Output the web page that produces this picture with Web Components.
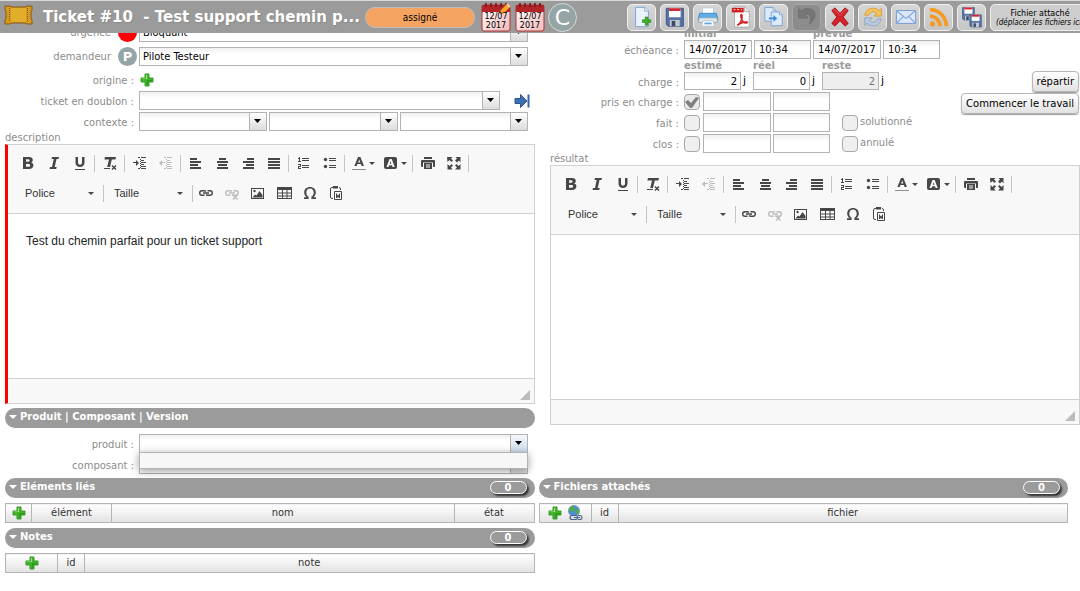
<!DOCTYPE html>
<html lang="fr">
<head>
<meta charset="utf-8">
<title>Ticket #10</title>
<style>
html, body { margin: 0; background: #fff; }
body { font-family: "DejaVu Sans", Verdana, sans-serif; font-size: 10px; color: #000; overflow: hidden; }
</style>
</head>
<body>
<ticket-page></ticket-page>
<script>
const define = (name, template) => customElements.define(name, class extends HTMLElement {
  constructor() { super(); this.attachShadow({ mode: 'open' }); }
  connectedCallback() {
    this.shadowRoot.innerHTML = typeof template === 'function' ? template(this) : template;
  }
});
const bars = (list) => list.map(([x, y, w, h = 2]) => `<rect x="${x}" y="${y}" width="${w}" height="${h}"/>`).join('');
const link = '<path d="M6.500 5.700H4a2.300 2.300 0 0 0 0 4.600h2.500M9.500 5.700H12a2.300 2.300 0 0 1 0 4.600H9.500M7.800 6.500a2 2 0 0 0-1.300-.8M8.200 9.500a2 2 0 0 0 1.300.8M5 8h6" fill="none" stroke="currentColor" stroke-width="1.400"/>';
const textLines = bars([[6,2,2,1],[9,2,5,1],[8,4,1,1],[9,5,3,1],[8,6,1,1],[9,7,5,1],[8,8,1,1],[9,9,3,1],[8,10,1,1],[9,11,5,1],[8,12,1,1],[6,13,2,1],[9,13,5,1]]);
const page = (x, y) => `<path d="M${x} ${y}h9l3 3v12h-12z" fill="#dceafa" stroke="#7a9fd4"/><path d="M${x + 9} ${y}v3h3" fill="#fff" stroke="#7a9fd4"/>`;
const floppy = (x, y, s) => `<g transform="translate(${x} ${y}) scale(${s})"><path d="M1 1h19v20H3l-2-2z" fill="#5673a3" stroke="#33507f"/><path d="M4 1h13v10H4z" fill="#fff"/><path d="M4 1h13v3H4z" fill="#d8242c"/><path d="M5 14h11v7H5z" fill="#c3c9d2"/><path d="M7 15h4v6H7z" fill="#3c4a63"/></g>`;

const ICONS = {
  bold: [16, '<path fill-rule="evenodd" d="M3 2h6c2.500 0 3.800 1.300 3.800 3.100 0 1.200-.7 2-1.500 2.400 1.300.4 2.100 1.400 2.100 2.800C13.400 12.500 11.800 14 9 14H3zM6 4.300v2.400h2.400c1.700 0 1.700-2.400 0-2.400zM6 8.900v2.800h2.700c1.900 0 1.900-2.800 0-2.800z"/>'],
  italic: [16, '<path d="M6 2h7l-.5 2h-2L8.700 12h2l-.5 2H3.500l.5-2h2L7.700 4h-2.200z"/>'],
  underline: [16, '<path d="M3.500 2h2.500v5.500c0 3 4 3 4 0V2h2.500v5.700c0 5.700-9 5.700-9 0z"/><path d="M3 14h10v1H3z"/>'],
  clearformat: [16, '<path d="M3 2h11l-.6 2.500H9.800L8 12H5.200L7 4.500H2.400z"/><path d="M2 13h6v1H2z"/><path d="M10 10.500l4 4M14 10.500l-4 4" stroke="currentColor" stroke-width="1.500"/>'],
  indent: [16, textLines + '<path d="M1 7h3V5l3 3-3 3V8H1z"/>'],
  outdent: [16, textLines + '<path d="M7 7H4V5L1 8l3 3V8h3z"/>'],
  left: [16, bars([[2,3,7],[2,6,11],[2,9,8],[2,12,11]])],
  center: [16, bars([[5,3,7],[3,6,11],[4,9,9],[3,12,11]])],
  right: [16, bars([[7,3,7],[3,6,11],[6,9,8],[3,12,11]])],
  justify: [16, bars([[2,3,12],[2,6,12],[2,9,12],[2,12,12]])],
  numbered: [16, bars([[6,3,7,1],[6,5,7,1],[6,10,7,1],[6,12,7,1],[3,2,1,5],[2,3,1,1],[2,6,3,1],[2,9,3,1],[4,10,1,1],[2,11,3,1],[2,12,1,1],[2,13,3,1]])],
  bullets: [16, '<circle cx="3.500" cy="4.500" r="1.700"/><circle cx="3.500" cy="11.500" r="1.700"/>' + bars([[7,3,7,1],[7,5,7,1],[7,10,7,1],[7,12,7,1]])],
  color: [16, '<path fill-rule="evenodd" d="M7 2h2.400l3.600 9h-2.400l-.7-1.900H6.400L5.700 11H3.400zM8.200 4.600L7.100 7.400h2.200z"/><path d="M1 14h14v1H1z" opacity=".6"/>'],
  bgcolor: [16, '<rect x="1" y="2" width="13" height="12" rx="2"/><path fill="#f8f8f8" fill-rule="evenodd" d="M6.500 4h2.200l3 8H9.600L9 10.300H6.200L5.600 12H3.500zM7.600 6.300l-.8 2.400h1.600z"/>'],
  print: [16, '<path d="M4 2h8v2H4zM2 5h12c1 0 1 1 1 1v5c0 1-1 1-1 1h-1V7.500H3V12H2c-1 0-1-1-1-1V6c0-1 1-1 1-1z"/><path fill-rule="evenodd" d="M4 8h8v6H4zm2 1.500v1h4v-1zm0 2v1h4v-1z"/>'],
  maximize: [16, '<path d="M1 2h5.500L5 3.500 7 5.500 5.500 7 3.500 5 1.500 7zM14.500 2v5.500l-1.500-2L11 7.500 9 5.500l2-2L9.500 2zM1.500 14.500V9l2 2 2-2L7 10.500l-2 2 1.500 2zM14.500 14.500H9l2-2-2-2L10.500 9l2 2 2-2z"/>'],
  link: [16, link],
  unlink: [16, link + '<path d="M9 10l4.500 4.500M13.500 10L9 14.500" stroke="currentColor" stroke-width="1.500"/>'],
  image: [16, '<path fill-rule="evenodd" d="M1 3h13v11H1zm1 1v9h11V4z"/><circle cx="4.500" cy="6" r="1.200"/><path d="M2.500 12.500l2.500-3 1.500 1L9.500 6l3 4v2.500z"/>'],
  table: [16, '<path fill-rule="evenodd" d="M1 2h15v12H1zm1 3v2.500h4V5zm5 0v2.500h3.500V5zm4.500 0v2.500H15V5zM2 8.500V13h4V8.500zm5 0V13h3.500V8.500zm4.500 0V13H15V8.500z"/><path d="M2 10.500h13v1H2z"/>'],
  omega: [16, '<path d="M2 14v-1.800h2.600C2.900 10.900 2.200 9.300 2.200 7.400 2.200 4.300 4.500 2 8 2s5.800 2.300 5.800 5.400c0 1.900-.7 3.500-2.400 4.800H14V14H9.400v-2.200c1.600-.9 2.300-2.400 2.300-4.400 0-2.300-1.300-4-3.700-4S4.300 5.100 4.300 7.400c0 2 .7 3.500 2.300 4.400V14z"/>'],
  paste: [16, '<path d="M5 2.500H4Q2.500 2.500 2.500 4v8q0 1.500 1.500 1.500h1M11 2.500q1.500 0 1.500 1.500v1" fill="none" stroke="currentColor"/><path d="M5 1h5v2.500H5z"/><path d="M6.500 6.500h7v8h-7z" fill="none" stroke="currentColor"/><path d="M8 8.500h1v2l1-1 1 1v-2h1V13h-1l-1-1.200L9 13H8z"/>'],
  plus: [16, '<path d="M6 2h4v4h4v4h-4v4H6v-4H2V6h4z" fill="#41b528" stroke="#3a9a2c"/><path d="M7 3h1v4H3V6.500h4z" fill="#a4e38a"/><path d="M8 8h5v1.500H9.500V13H8z" fill="#2f9a1a"/>'],
  goto: [16, '<path d="M1 5.500h5.500V1.500l6.500 6.500-6.500 6.500v-4H1z" fill="#3d70b4" stroke="#2c5590"/><path d="M13.500 1.500h2v13h-2z" fill="#3465a4"/>'],
  globe: [16, '<circle cx="7" cy="6" r="5.500" fill="#4c8fd6" stroke="#7f9cba"/><path d="M2 4q3-4 5-2t-1 4-4-2zM8 5q4-2 4 1t-2 3-2-4z" fill="#4fae3c"/><path d="M5 10.500h4q1.500 0 1.500 2t-1.500 2H5q-2 0-2-2t2-2zM11 10.500h2.500q1.500 0 1.500 2t-1.500 2H11M7 12.500h6" fill="#d5deea" stroke="#4d6485" stroke-width="1.200"/>'],
  newdoc: [24, '<path d="M5 1.500h10l4 4v17H5z" fill="#eaf2fc" stroke="#7a9fd4"/><path d="M15 1.500v4h4" fill="#fff" stroke="#7a9fd4"/><path d="M12.500 15h3v-3h3v3h3v3h-3v3h-3v-3h-3z" fill="#3fae2a" stroke="#2a8a1e" stroke-width=".7"/>'],
  save: [24, floppy(1.5, 1.5, 0.98)],
  printer: [24, '<path d="M6 2h12v8H6z" fill="#fafdff" stroke="#bccbd9"/><path d="M3 8h18l1.500 5v3h-21v-3z" fill="#60aee8" stroke="#3c87c8"/><path d="M2 13h20v5H2z" fill="#e6ebf0" stroke="#9aa7b4"/><path d="M6 16h12l1 6H5z" fill="#fff" stroke="#b3c0cc"/><path d="M8 18h8v2H8z" fill="#62a9e0"/>'],
  pdf: [24, '<path d="M5 1h11l5 5v17H5z" fill="#fff" stroke="#a7a7a7"/><path d="M16 1v5h5" fill="#eee" stroke="#a7a7a7"/><path d="M2 2h13v5H2z" fill="#d31e1e"/><path d="M4 4h2M8 4h2M12 4h1" fill="none" stroke="#fff"/><path d="M8 21c3-1 6-7 5-11-1-2-2 1 0 5s5 4 6 3-6-1-11 3z" fill="none" stroke="#cf2323" stroke-width="1.800"/>'],
  copy: [24, page(2, 1.5) + page(9, 6.500) + '<path d="M6 12h5V9l5 4.500-5 4.500v-3H6z" fill="#3d8ce0" stroke="#fff" stroke-width=".6"/>'],
  undo: [24, '<path d="M3 3v10h10l-3.500-3.500c4-2 8.500 1 5.500 10 8-6 8-17-3-16.500-2.500 0-4.500 1-6 2.500z" fill="#777" stroke="#6d6d6d"/>'],
  remove: [24, '<path d="M3 5l3.500-3L12 8l5.500-6L21 5l-5.500 7 5.500 7-3.500 3L12 16l-5.500 6L3 19l5.500-7z" fill="#d6232b" stroke="#9f1a20"/><path d="M5 5l1.500-1L12 10l5.500-6L19 5" fill="none" stroke="#e2565c"/>'],
  refresh: [24, '<path d="M3 10C4 2 14 0 18 5l3-2v8h-8l3-3c-3-3-8-2-9 2z" fill="#f5c55c" stroke="#d79d35"/><path d="M21 14c-1 8-11 10-15 5l-3 2v-8h8l-3 3c3 3 8 2 9-2z" fill="#b9cbe0" stroke="#8ea5c0"/>'],
  mail: [24, '<path d="M1.500 5h21v14h-21z" fill="#dbe8fa" stroke="#6f96cf"/><path d="M2 5.500l10 8 10-8M2 18.500l7-7M22 18.500l-7-7" fill="none" stroke="#7fa3d8" stroke-width="1.200"/>'],
  feed: [24, '<g fill="none" stroke="#f59a23" stroke-width="4"><path d="M2 11c6 0 11 5 11 11"/><path d="M2 4c10 0 18 8 18 18"/></g><circle cx="5" cy="19.500" r="2.800" fill="#f59a23"/>'],
  multi: [24, floppy(1, 1, 0.68) + floppy(9, 9, 0.66)],
};

define('app-icon', (el) => {
  const [box, body] = ICONS[el.getAttribute('name')];
  return `<style>:host{display:block;flex:none;width:var(--icon,16px);height:var(--icon,16px)}svg{display:block;width:100%;height:100%}</style>
  <svg viewBox="0 0 ${box} ${box}" fill="currentColor" aria-hidden="true">${body}</svg>`;
});

define('tool-button', (el) => `<style>
  :host { display: block; flex: none; }
  button { display: grid; place-items: center; width: 29px; height: 27px; padding: 0; box-sizing: border-box;
    border: 1px solid #efefef; border-radius: 5px; background: linear-gradient(#d6d6d6, #c6c6c6); --icon: 22px; }
  button:disabled { background: #8c8c8c; border-color: #a8a8a8; }
  </style><button type="button" aria-label="${el.getAttribute('label')}" ${el.hasAttribute('disabled') ? 'disabled' : ''}><app-icon name="${el.getAttribute('icon')}"></app-icon></button>`);

define('date-badge', (el) => `<style>
  :host { display: block; flex: none; }
  button { display: grid; width: 30px; height: 30px; padding: 0; border: 0; background: none; font: 8px/9px "DejaVu Sans", sans-serif; color: #000; }
  svg, span { grid-area: 1 / 1; }
  span { padding-top: 10px; text-align: center; }
  </style><button type="button"><svg width="30" height="30" viewBox="0 0 30 30" aria-hidden="true">
  <defs><linearGradient id="g" x1="0" y1="0" x2="1" y2="1"><stop offset="0" stop-color="#fff"/><stop offset="1" stop-color="#f3b9b9"/></linearGradient></defs>
  <rect x="1" y="3" width="28" height="26" rx="2" fill="url(#g)" stroke="#b43232"/><path d="M1 4q0-1 1-1h26q1 0 1 1v6H1z" fill="#b32428"/>
  <path d="M5 1v4M10 1v4M15 1v4M20 1v4M25 1v4" stroke="#6d1416" stroke-width="1.500"/>
  ${el.hasAttribute('edit') ? '<path d="M19 12l1-4 6-6 3 3-6 6z" fill="#f6a531" stroke="#c9761c" stroke-width=".7"/><path d="M26 2l3 3" stroke="#f0c9a0" stroke-width="2"/>' : ''}
  </svg><span>12/07<br>2017</span></button>`);

define('ticket-header', `<style>
  :host { display: flex; align-items: center; height: 33px; box-sizing: border-box; border-top: 1px solid #d9d9d9; background: #9b9b9b; overflow: hidden; position: relative; z-index: 1; }
  .logo { flex: none; margin-left: 4px; margin-bottom: 4px; }
  h1 { flex: 1; min-width: 0; margin: 0 4px 0 10px; font-size: 15px; line-height: 20px; color: #fff; white-space: pre; overflow: hidden; text-shadow: 1px 1px 1px #8a8a8a; }
  .status { flex: none; width: 110px; height: 21px; box-sizing: border-box; border: 1px solid #bdbdbd; border-radius: 10px; background: #f4a460;
    font: 10px/20px "DejaVu Sans Condensed", "DejaVu Sans", sans-serif; text-align: center; }
  .dates { display: flex; gap: 4px; margin: 0 3px 0 6px; }
  .avatar { flex: none; width: 29px; height: 29px; box-sizing: border-box; border: 1px solid #d5dada; border-radius: 50%; background: #95a5a6; color: #fff; font: 22px/27px "DejaVu Sans", sans-serif; text-align: center; }
  nav { display: flex; gap: 4px; margin-left: 50px; }
  .drop { flex: none; width: 100px; height: 27px; box-sizing: border-box; margin: 0 -10px 0 4px; padding: 4px 0 0; border: 1px solid #efefef; border-radius: 5px; background: #cdcdcd;
    font: 8px/9px "DejaVu Sans", sans-serif; text-align: center; white-space: nowrap; }
  .drop em { font-family: "DejaVu Sans Condensed", "DejaVu Sans", sans-serif; }
  </style>
  <svg class="logo" width="29" height="20" viewBox="0 0 29 20" aria-hidden="true"><path d="M1 1h5q1 1 2 1h13q1 0 2-1h5v4l-1 2v6l1 2v4h-5q-1-1-2-1H8q-1 0-2 1H1v-4l1-2V7L1 5z" fill="#d79a1c" stroke="#87591a"/><path d="M7 3h15v14H7z" fill="#e3ad2c"/><path d="M5.500 3v14M23.500 3v14" stroke="#8d5e17" stroke-dasharray="1 1"/></svg>
  <h1>Ticket #10  - Test support chemin p...</h1>
  <div class="status">assigné</div>
  <div class="dates"><date-badge edit></date-badge><date-badge></date-badge></div>
  <div class="avatar">C</div>
  <nav>
    <tool-button icon="newdoc" label="Nouveau"></tool-button><tool-button icon="save" label="Enregistrer"></tool-button>
    <tool-button icon="printer" label="Imprimer"></tool-button><tool-button icon="pdf" label="Exporter"></tool-button>
    <tool-button icon="copy" label="Copier"></tool-button><tool-button icon="undo" label="Annuler" disabled></tool-button>
    <tool-button icon="remove" label="Supprimer"></tool-button><tool-button icon="refresh" label="Actualiser"></tool-button>
    <tool-button icon="mail" label="Courriel"></tool-button><tool-button icon="feed" label="Suivi"></tool-button>
    <tool-button icon="multi" label="Mode multiple"></tool-button>
  </nav>
  <div class="drop">Fichier attaché<br><em>(déplacer les fichiers ici)</em></div>`);

define('combo-box', `<style>
  :host { display: grid; grid-template-columns: minmax(0, 1fr) 17px; height: 19px; box-sizing: border-box; border: 1px solid #b3b3b3; background: linear-gradient(#f0f0f0, #fff 6px); position: relative; min-width: 0; }
  ::slotted(select) { grid-area: 1 / 1 / 2 / 3; width: 100%; height: 17px; padding: 0 20px 0 3px; border: 0; appearance: none; background: none; color: #000; font: 11px/17px "DejaVu Sans Condensed", "DejaVu Sans", sans-serif; outline: 0; }
  svg { grid-area: 1 / 2; display: block; width: 16px; height: 17px; border-left: 1px solid #b3b3b3; background: linear-gradient(#fff, #dcdcdc); pointer-events: none; }
  :host([open]) svg { background: linear-gradient(#f3f7fc, #cfdcee); }
  .menu { display: none; }
  :host([open]) .menu { display: block; position: absolute; z-index: 2; left: -1px; right: -1px; top: 17px; height: 15px; border: 1px solid #b3b3b3; background: #f7f7f7; box-shadow: 0 2px 8px rgba(0,0,0,.4); }
  </style><slot></slot><svg viewBox="0 0 16 17" aria-hidden="true"><path d="M4 6h7L7.500 10z"/></svg><div class="menu"></div>`);

const FIELD_CSS = `
  .row { display: grid; grid-template-columns: 129px minmax(0, 1fr); column-gap: 5px; align-items: center; margin-bottom: 2px; }
  .row > label, .row > .label { text-align: right; color: #8c8c8c; line-height: 13px; padding-top: 2px; white-space: nowrap; }
  label { color: #8c8c8c; }
`;

define('rich-editor', (el) => {
  const b = (n, off) => `<button type="button" aria-label="${n}" ${off ? 'disabled' : ''}><app-icon name="${n}"></app-icon></button>`;
  const c = (n) => `<button type="button" class="wide" aria-label="${n}"><app-icon name="${n}"></app-icon><i class="caret"></i></button>`;
  const sep = '<span class="sep"></span>';
  const combo = (t) => `<button type="button" class="combo">${t}<i class="caret"></i></button><span class="line"></span>`;
  return `<style>
  :host { display: block; }
  label { display: block; height: 12px; line-height: 12px; color: #8c8c8c; }
  .box { height: 260px; box-sizing: border-box; display: flex; flex-direction: column; border: 1px solid #d1d1d1; background: #fff; }
  :host([required]) .box { border-left: 3px solid #f00; }
  .bar { padding: 5px 7px 7px; display: grid; gap: 4px; background: #f8f8f8; border-bottom: 1px solid #d1d1d1; color: #474747; }
  .tools { display: flex; align-items: center; height: 26px; }
  button { display: grid; place-items: center; width: 26px; height: 26px; padding: 0; border: 0; background: none; color: inherit; }
  button:disabled { color: #bdbdbd; }
  button.wide { display: flex; align-items: center; justify-content: center; gap: 2px; width: 32px; }
  button.combo { display: flex; align-items: center; justify-content: space-between; width: 88px; padding: 0 9px 0 10px; font: 11px/16px "Liberation Sans", Arial, sans-serif; color: #333; }
  .caret { flex: none; width: 0; border: 3px solid transparent; border-bottom: 0; border-top-color: #474747; }
  .sep, .line { flex: none; width: 1px; height: 17px; background: #c4c4c4; }
  .sep { margin: 0 2px 0 1px; }
  textarea { flex: 1; min-height: 0; margin: 0; padding: 19px 18px; border: 0; resize: none; outline: 0; font: 12px/16px "Liberation Sans", Arial, sans-serif; color: #222; background: #fff; }
  .foot { display: flex; justify-content: flex-end; align-items: flex-end; height: 25px; padding: 0 4px 3px; box-sizing: border-box; border-top: 1px solid #d1d1d1; background: #f8f8f8; }
  .grip { border: 5px solid; border-color: transparent #bcbcbc #bcbcbc transparent; }
  </style>
  <label for="text">${el.getAttribute('label')}</label>
  <div class="box"><div class="bar">
    <div class="tools">${b('bold')}${b('italic')}${b('underline')}${sep}${b('clearformat')}${sep}${b('indent')}${b('outdent', 1)}${sep}${b('left')}${b('center')}${b('right')}${b('justify')}${sep}${b('numbered')}${b('bullets')}${sep}${c('color')}${c('bgcolor')}${sep}${b('print')}${b('maximize')}${sep}</div>
    <div class="tools">${combo('Police')}${combo('Taille')}${b('link')}${b('unlink', 1)}${b('image')}${b('table')}${b('omega')}${b('paste')}</div>
  </div><textarea id="text">${el.getAttribute('value') || ''}</textarea><div class="foot"><span class="grip"></span></div></div>`;
});

define('section-bar', (el) => `<style>
  :host { display: flex; align-items: center; height: 20px; box-sizing: border-box; padding: 0 8px 0 4px; border-radius: 10px; background: #9b9b9b; color: #fff; font-size: 10px; font-weight: bold; line-height: 16px; }
  i { border: 4px solid transparent; border-top-color: #fff; border-bottom: 0; margin: 0 3px 2px 0; }
  h2 { flex: 1; margin: 0 0 2px; font: inherit; }
  .count { width: 37px; height: 13px; box-sizing: border-box; border: 1px solid #fff; border-radius: 7px; box-shadow: 2px 2px 2px #333; background: #9b9b9b; font-size: 10px; line-height: 12px; text-align: center; margin-bottom: 1px; }
  </style><i></i><h2>${el.getAttribute('label')}</h2>${el.hasAttribute('count') ? `<span class="count">${el.getAttribute('count')}</span>` : ''}`);

define('list-table', (el) => {
  const cols = el.getAttribute('columns').split(',').map((c) => c.split(':'));
  return `<style>
  :host { display: block; margin: 5px 0; }
  table { width: 100%; border-collapse: collapse; table-layout: fixed; }
  th { height: 18px; padding: 0; border: 1px solid #b5b5b5; background: linear-gradient(#fff, #e2e2e2); font: 11px/18px "DejaVu Sans Condensed", "DejaVu Sans", sans-serif; color: #333; }
  .tools { display: flex; justify-content: center; gap: 4px; }
  .tools button { display: block; padding: 0; border: 0; background: none; }
  </style><table><colgroup>${cols.map(([, w]) => `<col${w ? ` style="width:${w}px"` : ''}>`).join('')}</colgroup>
  <thead><tr>${cols.map(([n]) => `<th scope="col">${n[0] === '+' ? `<span class="tools"><button type="button" aria-label="Ajouter"><app-icon name="plus"></app-icon></button>${n === '++' ? '<button type="button" aria-label="Ajouter un lien"><app-icon name="globe"></app-icon></button>' : ''}</span>` : n}</th>`).join('')}</tr></thead></table>`;
});

define('ticket-request', `<style>${FIELD_CSS}
  :host { display: block; }
  .fields { padding-right: 7px; }
  .marked { grid-template-columns: 132px minmax(0, 1fr); column-gap: 2px; margin-bottom: 5px; }
  .pair { display: flex; justify-content: flex-end; align-items: center; gap: 7px; height: 19px; }
  .dot { width: 19px; height: 19px; border-radius: 50%; background: #f00; }
  .who { background: #95a5a6; color: #fff; font-size: 13px; font-weight: bold; line-height: 19px; text-align: center; }
  .requester { margin-bottom: 4px; }
  .three { display: grid; grid-template-columns: repeat(3, 1fr); gap: 2px; }
  .with-link { display: flex; }
  .with-link combo-box { flex: 1; margin-right: 14px; }
  button.icon { padding: 0; border: 0; background: none; display: block; }
  .origin { height: 19px; }
  .with-link button { margin-right: -2px; }
  .last { margin-bottom: 1px; }
  section-bar { margin: 4px 0 6px; }
  </style>
  <div class="fields">
    <div class="row marked"><div class="pair"><label for="urgence">urgence</label><span class="dot"></span></div><combo-box><select id="urgence"><option>Bloquant</option></select></combo-box></div>
    <div class="row marked requester"><div class="pair"><label for="demandeur">demandeur</label><span class="dot who">P</span></div><combo-box><select id="demandeur"><option>Pilote Testeur</option></select></combo-box></div>
    <div class="row origin"><span class="label">origine :</span><button type="button" class="icon" aria-label="Ajouter une origine"><app-icon name="plus"></app-icon></button></div>
    <div class="row"><label for="doublon">ticket en doublon :</label><div class="with-link"><combo-box><select id="doublon"><option></option></select></combo-box><button type="button" class="icon" aria-label="Ouvrir le ticket"><app-icon name="goto"></app-icon></button></div></div>
    <div class="row last"><label for="ctx">contexte :</label><div class="three"><combo-box><select id="ctx"><option></option></select></combo-box><combo-box><select aria-label="contexte 2"><option></option></select></combo-box><combo-box><select aria-label="contexte 3"><option></option></select></combo-box></div></div>
  </div>
  <rich-editor label="description" required value="Test du chemin parfait pour un ticket support"></rich-editor>
  <section-bar label="Produit | Composant | Version"></section-bar>
  <div class="fields">
    <div class="row"><label for="produit">produit :</label><combo-box open><select id="produit"><option></option></select></combo-box></div>
    <div class="row"><label for="composant">composant :</label><combo-box><select id="composant"><option></option></select></combo-box></div>
  </div>`);

const CHECK = "url(\"data:image/svg+xml,%3Csvg xmlns='http://www.w3.org/2000/svg' viewBox='0 0 14 14'%3E%3Cpath d='M0 7l3-2 3 3 5-6 3 1-7 10H5z' fill='%23808080'/%3E%3C/svg%3E\")";
define('ticket-treatment', `<style>${FIELD_CSS}
  :host { display: block; }
  .fields { display: grid; grid-template-columns: minmax(0, 1fr) auto; }
  .actions { display: flex; flex-direction: column; align-items: flex-end; gap: 1px; padding: 44px 1px 0 0; }
  .actions button { height: 21px; box-sizing: border-box; padding: 0 4px; border: 1px solid #b5b5b5; border-radius: 4px; background: linear-gradient(#fff, #e2e2e2); box-shadow: 0 1px 1px #999; font: 10px/20px "DejaVu Sans", sans-serif; color: #000; }
  .heads { display: grid; grid-template-columns: 64px 64px 1fr; column-gap: 5px; padding-left: 134px; height: 13px; line-height: 13px; font-weight: bold; color: #9b9b9b; }
  .heads.two { height: 12px; grid-template-columns: 124px 1fr; }
  .line { display: flex; align-items: center; gap: 2px; }
  input[type=text] { width: 57px; height: 19px; box-sizing: border-box; margin: 0; padding: 0 4px; border: 1px solid #b3b3b3; background: linear-gradient(#f0f0f0, #fff 6px); font: 10px/15px "DejaVu Sans", sans-serif; color: #000; outline: 0; }
  input.day { width: 68px; }
  .when { margin: 0; height: 20px; }
  .work input[type=text] { height: 18px; text-align: right; padding: 0 3px 0 0; }
  .work span { width: 8px; line-height: 18px; font-size: 11px; }
  input:disabled { background: #eee !important; color: #777 !important; }
  input[type=checkbox] { appearance: none; flex: none; width: 16px; height: 16px; margin: 0 1px 0 0; border: 1px solid #a8a8a8; border-radius: 4px; background: #efefef; }
  input[type=checkbox]:checked { background: #e9e9e9 ${CHECK}; }
  .line input.extra { margin: 0 0 0 10px; }
  .line label { padding-bottom: 2px; }
  .work { margin-bottom: 2px; }
  .state { height: 19px; }
  .last { margin-bottom: 0; }
  </style>
  <div class="fields"><div>
    <div class="heads two"><span>initial</span><span>prévue</span></div>
    <div class="row when"><label for="d1">échéance :</label><div class="line"><input type="text" class="day" id="d1" value="14/07/2017"><input type="text" aria-label="heure initiale" value="10:34"><input type="text" class="day" aria-label="date prévue" value="14/07/2017"><input type="text" aria-label="heure prévue" value="10:34"></div></div>
    <div class="heads"><span>estimé</span><span>réel</span><span>reste</span></div>
    <div class="row work"><label for="w1">charge :</label><div class="line"><input type="text" id="w1" value="2"><span>j</span><input type="text" aria-label="réel" value="0"><span>j</span><input type="text" aria-label="reste" value="2" disabled><span>j</span></div></div>
    <div class="row state"><label for="c1">pris en charge :</label><div class="line"><input type="checkbox" id="c1" checked><input type="text" class="day" aria-label="date de prise en charge"><input type="text" aria-label="heure de prise en charge"></div></div>
    <div class="row state"><label for="c2">fait :</label><div class="line"><input type="checkbox" id="c2"><input type="text" class="day" aria-label="date de fin"><input type="text" aria-label="heure de fin"><input type="checkbox" class="extra" id="c3"><label for="c3">solutionné</label></div></div>
    <div class="row state last"><label for="c4">clos :</label><div class="line"><input type="checkbox" id="c4"><input type="text" class="day" aria-label="date de clôture"><input type="text" aria-label="heure de clôture"><input type="checkbox" class="extra" id="c5"><label for="c5">annulé</label></div></div>
  </div>
  <div class="actions"><button type="button">répartir</button><button type="button">Commencer le travail</button></div></div>
  <rich-editor label="résultat"></rich-editor>`);

define('ticket-page', `<style>
  :host { display: block; }
  main { overflow: hidden; }
  .top { display: grid; grid-template-columns: minmax(0, 1fr) minmax(0, 1fr); gap: 15px; padding-left: 5px; margin-top: -10px; }
  ticket-treatment { padding-top: 4px; }
  .lists { display: grid; grid-template-columns: minmax(0, 1fr) minmax(0, 1fr); gap: 4px; padding: 2px 12px 0 5px; }
  </style>
  <ticket-header></ticket-header>
  <main>
    <div class="top"><ticket-request></ticket-request><ticket-treatment></ticket-treatment></div>
    <div class="lists">
      <div>
        <section-bar label="Eléments liés" count="0"></section-bar>
        <list-table columns="+:26,élément:80,nom,état:80"></list-table>
        <section-bar label="Notes" count="0"></section-bar>
        <list-table columns="+:52,id:27,note"></list-table>
      </div>
      <div>
        <section-bar label="Fichiers attachés" count="0"></section-bar>
        <list-table columns="++:52,id:27,fichier"></list-table>
      </div>
    </div>
  </main>`);
</script>
</body>
</html>
